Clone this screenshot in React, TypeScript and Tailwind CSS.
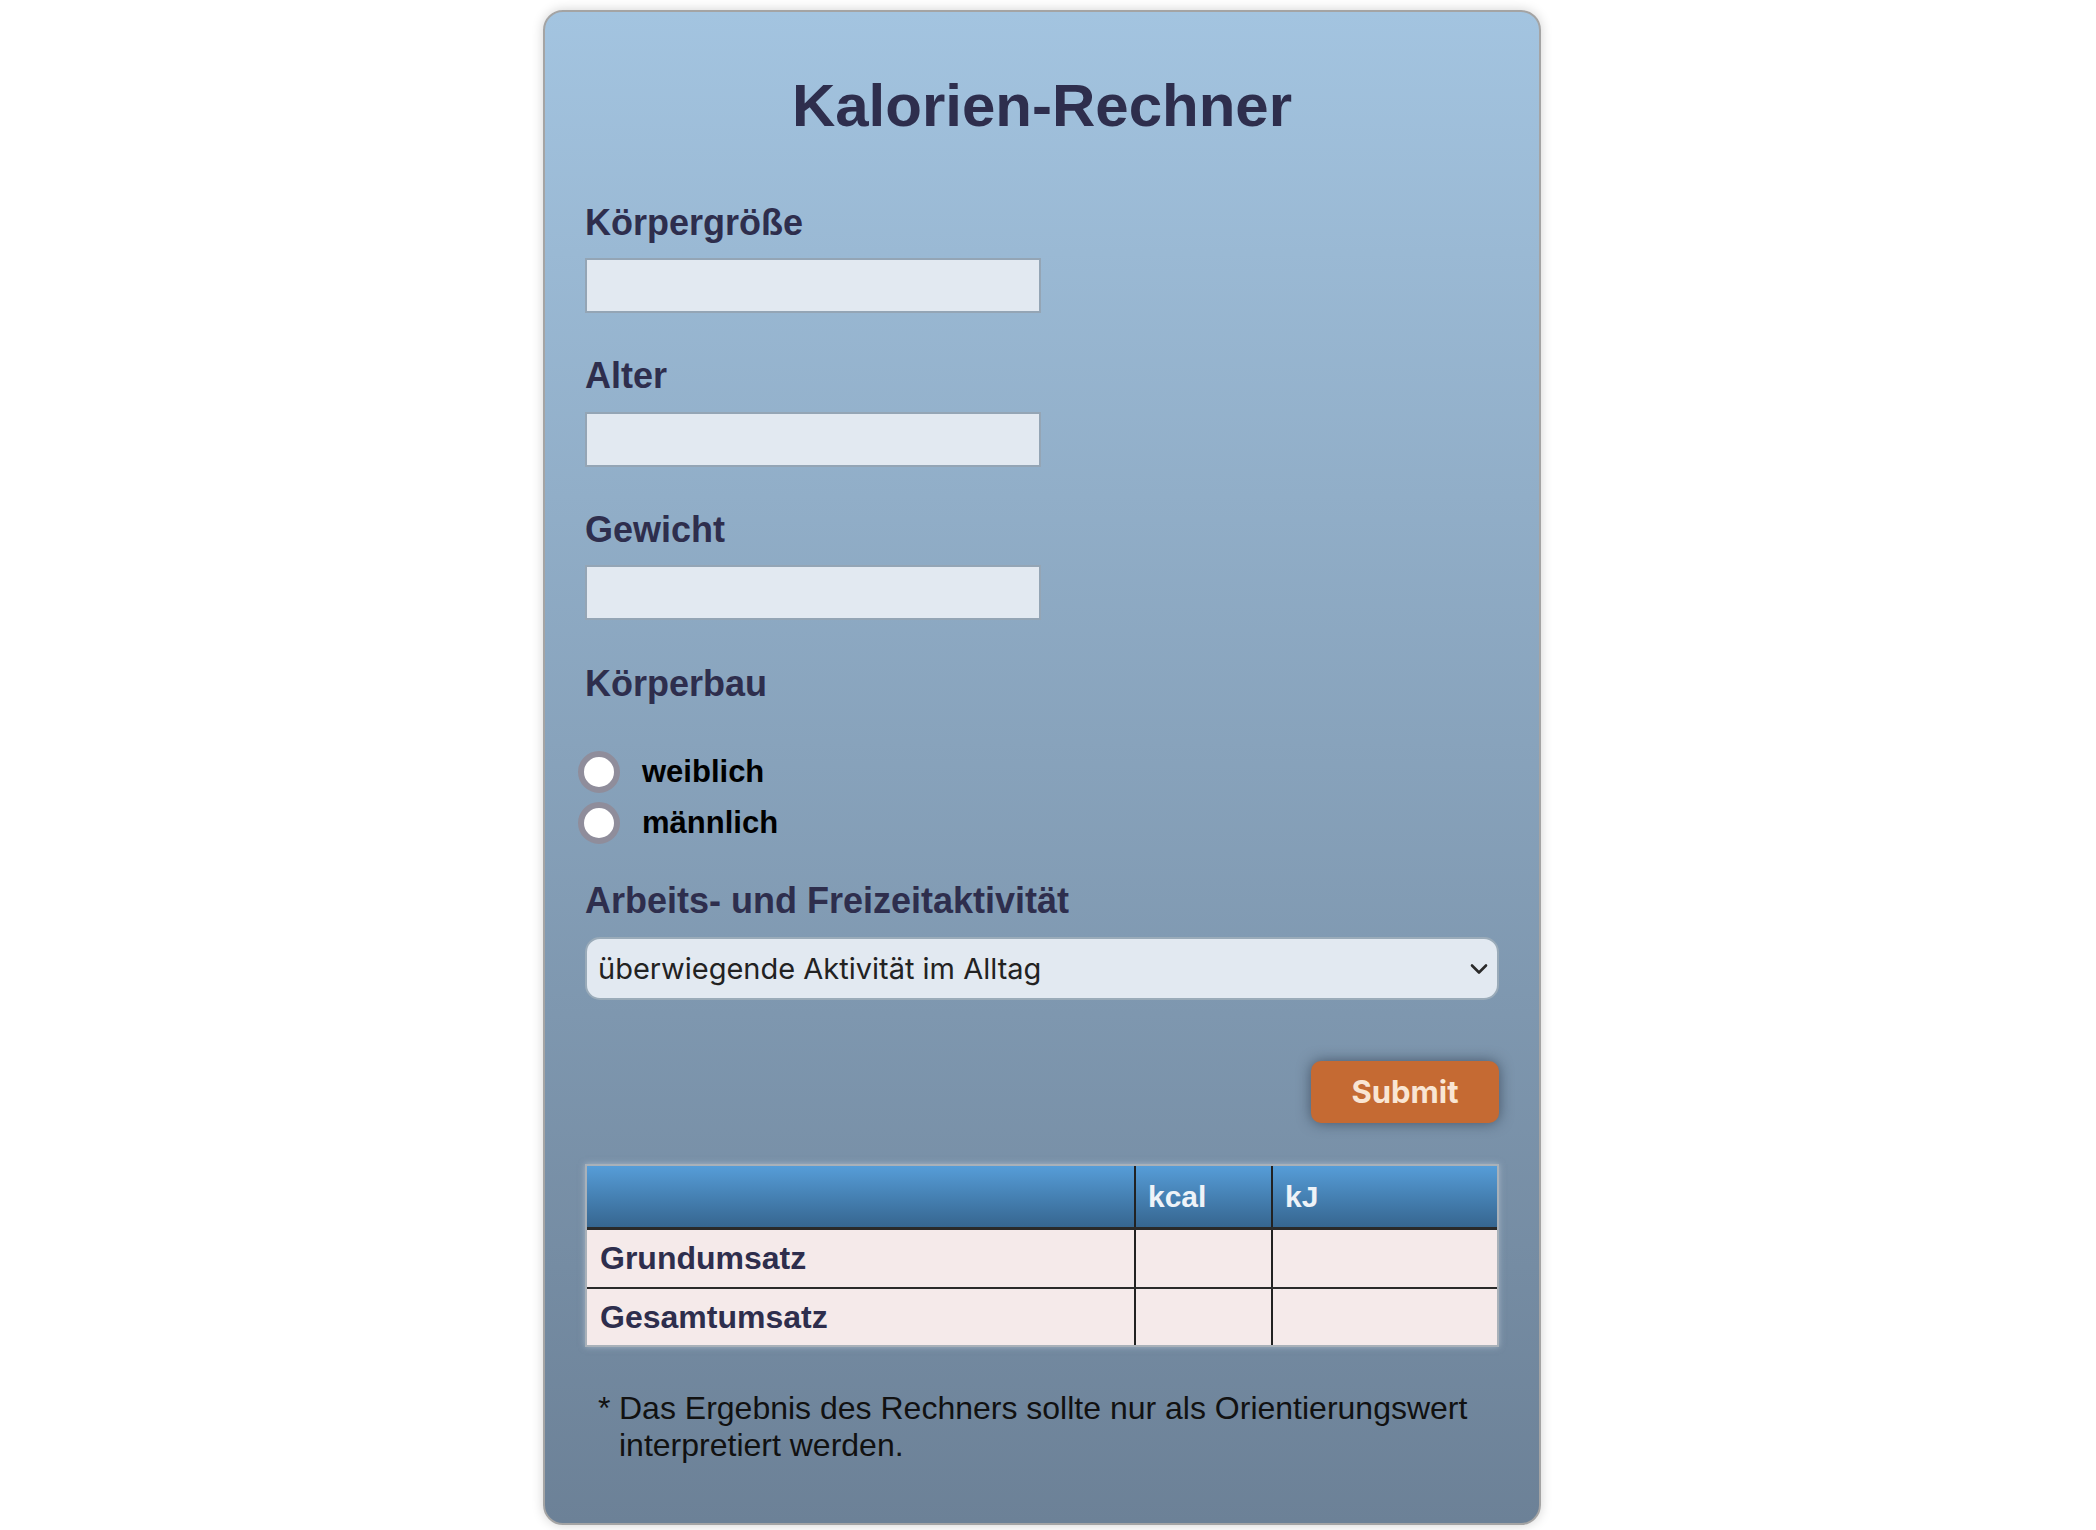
import React from "react";

const labelCls = "block text-[36px] leading-[40px] font-bold text-[#2e2e4d]";
const inputCls =
    "block w-[456px] h-[55px] border-2 border-[#94a5b5] bg-[#e2e9f1] outline-none px-2";

function Radio({label, className}: {label: string; className?: string}) {
    return (
        <label className={`flex items-center h-[51px] ml-[-7px] cursor-pointer ${className ?? ""}`}>
            <span className="w-[42px] h-[42px] rounded-full border-[6px] border-[#8f8d9b] bg-white shrink-0" />
            <span className="ml-[22px] text-[31px] leading-[51px] font-bold text-black">{label}</span>
        </label>
    );
}

export default function App() {
    return (
        <div className="min-h-screen bg-white flex justify-center pt-[10px] pb-[6px] pr-[12px] font-['Liberation_Sans',Arial,sans-serif]">
            <div className="w-[998px] rounded-[20px] border-2 border-[#a4a4a4] bg-linear-to-b from-[#a3c4e0] to-[#6c8197] shadow-[0_0_12px_rgba(0,0,0,0.18)] px-[40px] pt-[58px] pb-[59px] flex flex-col">
                <h1 className="text-center text-[60px] leading-[72px] font-bold text-[#2e2e4d]">
                    Kalorien-Rechner
                </h1>

                <label htmlFor="groesse" className={`${labelCls} mt-[61px]`}>Körpergröße</label>
                <input id="groesse" type="text" className={`${inputCls} mt-[15px]`} />

                <label htmlFor="alter" className={`${labelCls} mt-[43px]`}>Alter</label>
                <input id="alter" type="text" className={`${inputCls} mt-[16px]`} />

                <label htmlFor="gewicht" className={`${labelCls} mt-[43px]`}>Gewicht</label>
                <input id="gewicht" type="text" className={`${inputCls} mt-[15px]`} />

                <div className={`${labelCls} mt-[44px]`}>Körperbau</div>
                <div className="mt-[42px] flex flex-col">
                    <Radio label="weiblich" />
                    <Radio label="männlich" />
                </div>

                <div className={`${labelCls} mt-[33px]`}>Arbeits- und Freizeitaktivität</div>
                <div className="mt-[16px] h-[63px] w-full rounded-[15px] border-2 border-[#9aabb9] bg-[#e2e9f1] flex items-center justify-between pl-[11px] pr-[9px]">
                    <span className="font-['Inter',sans-serif] text-[29px] text-[#222]">
                        überwiegende Aktivität im Alltag
                    </span>
                    <svg width="18" height="12" viewBox="0 0 18 12" className="text-[#2a2a2a]">
                        <path d="M2 2.5l7 7 7-7" fill="none" stroke="currentColor" strokeWidth="2.6" strokeLinecap="round" strokeLinejoin="round" />
                    </svg>
                </div>

                <button
                    type="button"
                    className="mt-[61px] self-end w-[188px] h-[62px] rounded-[10px] bg-[#c56a33] text-[#f9e5d3] font-['Inter',sans-serif] font-bold text-[31px] shadow-[0_0_14px_rgba(25,35,50,0.55)]"
                >
                    Submit
                </button>

                <div className="mt-[41px] w-full border-2 border-[#a9b1b9] shadow-[0_0_6px_rgba(210,220,230,0.5)]">
                    <div className="flex h-[64px] bg-linear-to-b from-[#569dd8] to-[#366690] border-b-[3px] border-[#2a2a2a] text-[30px] leading-[61px] font-bold text-[#eef3f8]">
                        <div className="w-[547px]" />
                        <div className="w-[137px] border-l-2 border-[#222] pl-[12px]">kcal</div>
                        <div className="flex-1 border-l-2 border-[#222] pl-[12px]">kJ</div>
                    </div>
                    {["Grundumsatz", "Gesamtumsatz"].map((row, i) => (
                        <div
                            key={row}
                            className={`flex bg-[#f5eaea] text-[32px] leading-[56px] font-bold text-[#2e2e4d] ${i === 0 ? "h-[59px] border-b-2 border-[#2a2a2a]" : "h-[56px]"}`}
                        >
                            <div className="w-[547px] pl-[13px]">{row}</div>
                            <div className="w-[137px] border-l-2 border-[#222]" />
                            <div className="flex-1 border-l-2 border-[#222]" />
                        </div>
                    ))}
                </div>

                <div className="mt-[43px] flex text-[32px] leading-[37px] text-[#111]">
                    <span className="ml-[13px] w-[21px] shrink-0">*</span>
                    <span>Das Ergebnis des Rechners sollte nur als Orientierungswert interpretiert werden.</span>
                </div>
            </div>
        </div>
    );
}
